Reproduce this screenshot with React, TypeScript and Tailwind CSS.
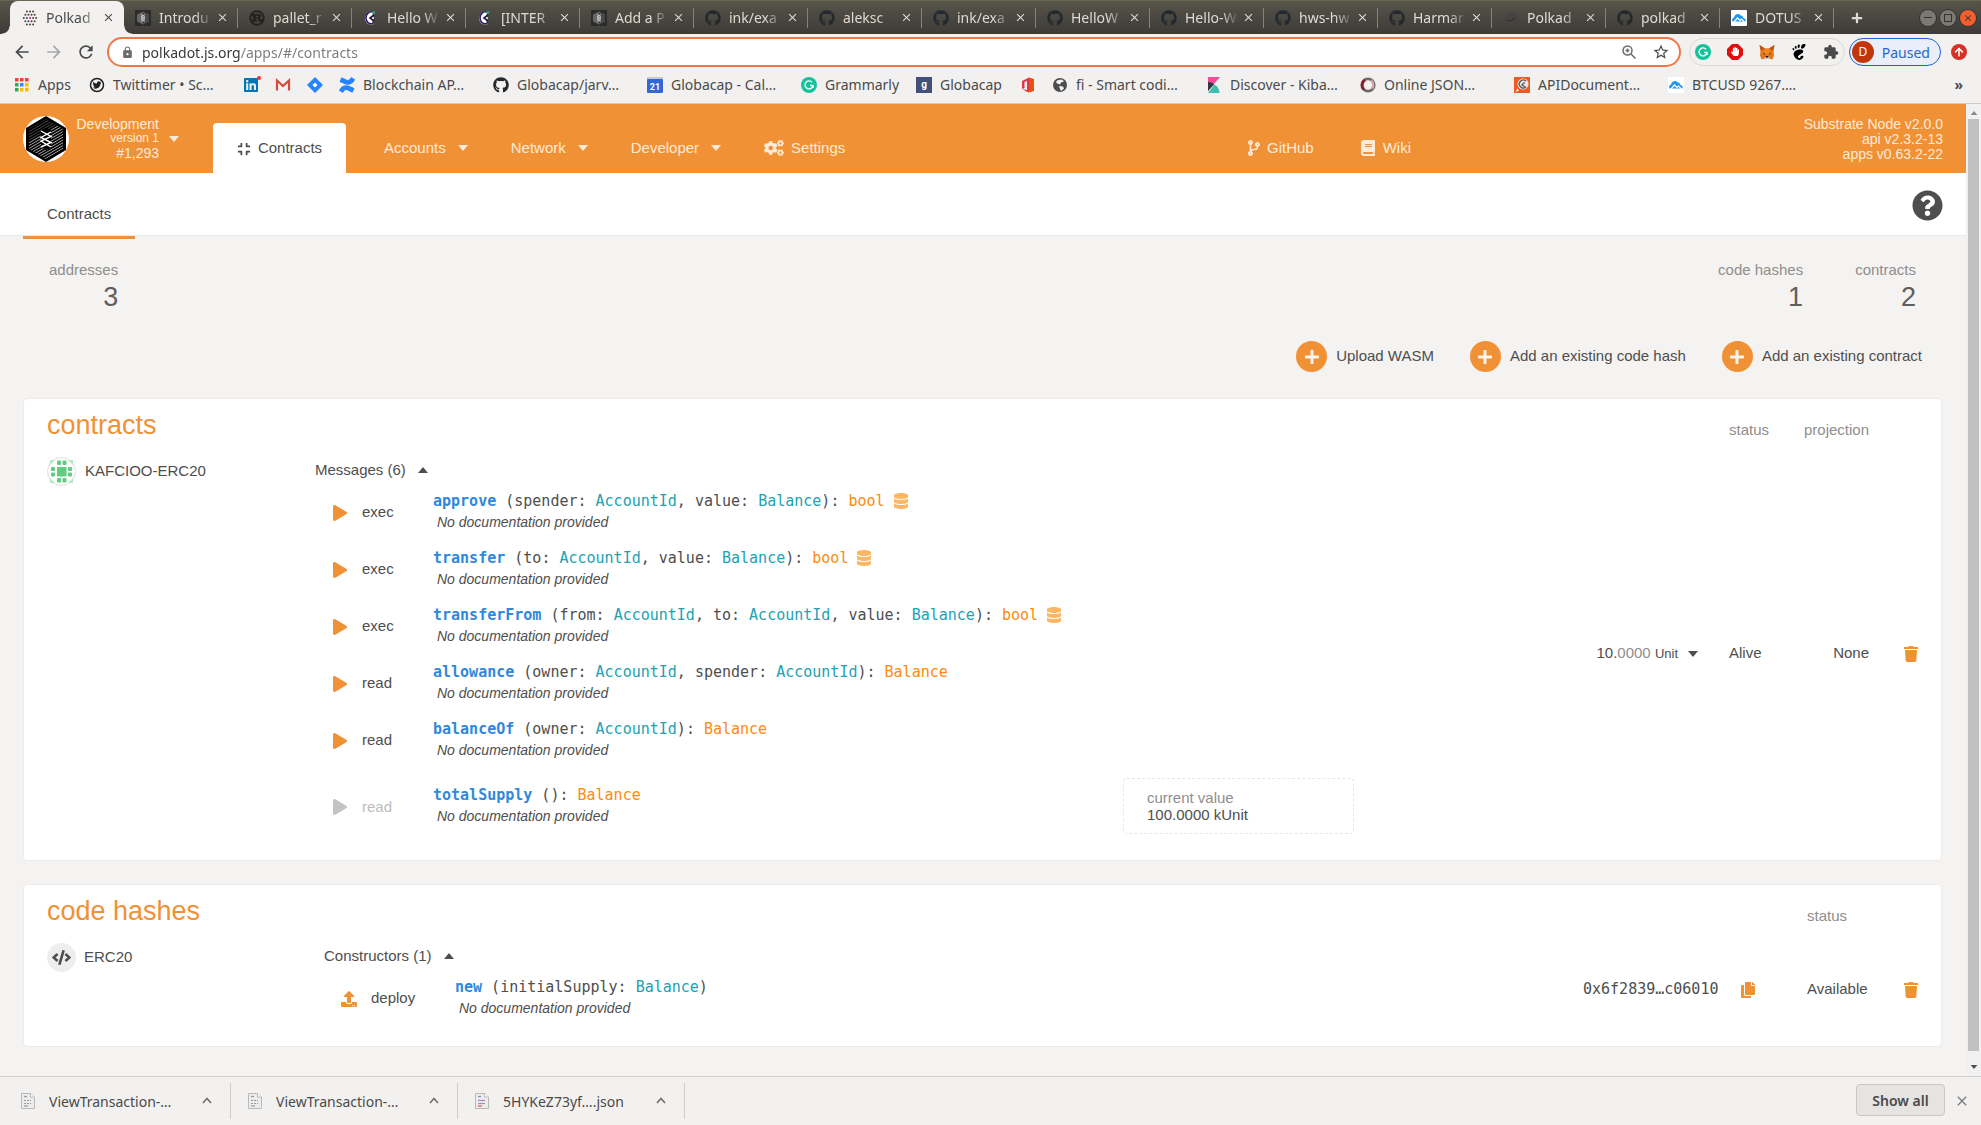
import React from 'react';
import {
  FaArrowUp,
  FaBook,
  FaCode,
  FaCodeBranch,
  FaCogs,
  FaCompress,
  FaCopy,
  FaDatabase,
  FaGithub,
  FaHandPaper,
  FaLinkedin,
  FaPlay,
  FaPlus,
  FaQuestionCircle,
  FaTrash,
  FaTwitter,
  FaUpload,
} from 'react-icons/fa';
import {
  MdArrowBack,
  MdArrowForward,
  MdClose,
  MdExtension,
  MdLock,
  MdRefresh,
  MdStarBorder,
} from 'react-icons/md';
import { SiConfluence, SiGnome, SiRust } from 'react-icons/si';

type IconName = string;

function DotRing() {
  const dots: React.ReactNode[] = [];
  const rows = [3, 4, 5, 4, 3];
  rows.forEach((n, r) => {
    for (let i = 0; i < n; i++) {
      const x = 8 + (i - (n - 1) / 2) * 3.1;
      const center = r === 2 && i === 2;
      dots.push(<circle key={`${r}-${i}`} cx={x} cy={1.6 + r * 3.2} r="1" fill={center ? '#e6007a' : '#444'} />);
    }
  });
  return (
    <svg viewBox="0 0 16 16" className="size-4">
      {dots}
    </svg>
  );
}

function Hexagon({ className }: { className: string }) {
  const lines = Array.from({ length: 18 }, (_, i) => i);
  return (
    <svg viewBox="0 0 46 46" className={className}>
      <defs>
        <clipPath id="hexClip">
          <polygon points="23,3 40,13 40,33 23,43 6,33 6,13" />
        </clipPath>
      </defs>
      <polygon points="23,0 43,12 43,34 23,46 3,34 3,12" fill="#000" />
      <g clipPath="url(#hexClip)" stroke="#d8d8d8" strokeWidth="0.9">
        {lines.map((i) => (
          <line key={i} x1="4" y1={14 + i * 2.8} x2="42" y2={-8 + i * 2.8} opacity={i < 5 ? 0.35 : 0.85} />
        ))}
      </g>
      <polygon points="18,14 23,12 28,14 28,32 23,34 18,31" fill="#000" />
      <path
        d="M18 15l10 5.500-10 4.500 10 6M28 16l-10 5.500 10 5-10 4.500"
        fill="none"
        stroke="#fff"
        strokeWidth="1.400"
      />
    </svg>
  );
}

function TinyHexagon() {
  return (
    <svg viewBox="0 0 16 16" className="size-4">
      <rect width="16" height="16" fill="#2b2b2b" />
      <path d="M8 1.500l6 3v7l-6 3-6-3v-7z" fill="#666" />
      <path d="M8 1.500l6 3v7l-6 3z" fill="#4a4a4a" />
      <path d="M6 4.500l4 2.500-4 2 4 2.500M10 4.500L6 7l4 2-4 2.500" fill="none" stroke="#ddd" strokeWidth="0.800" />
    </svg>
  );
}

function Identicon() {
  return (
    <svg viewBox="0 0 29 29" className="size-[29px] shrink-0">
      <circle cx="14.5" cy="14.5" r="14" fill="#fff" stroke="#ddd" />
      <g fill="#b5e7c3">
        <path d="M3 3h5l-5 5zM26 3v5l-5-5zM3 26v-5l5 5zM26 26h-5l5-5z" />
      </g>
      <g fill="#61cc7f">
        <rect x="10" y="10" width="9.500" height="9.500" />
        <rect x="10" y="3.500" width="4" height="4.500" rx="1" />
        <rect x="15.500" y="3.500" width="4" height="4.500" rx="1" />
        <rect x="10" y="21" width="4" height="4.500" rx="1" />
        <rect x="15.500" y="21" width="4" height="4.500" rx="1" />
        <rect x="4" y="10" width="4" height="4" rx="1" />
        <rect x="4" y="15.500" width="4" height="4" rx="1" />
        <rect x="21" y="10" width="4" height="4" rx="1" />
        <rect x="21" y="15.500" width="4" height="4" rx="1" />
      </g>
    </svg>
  );
}

function Favicon({ name }: { name: IconName }) {
  switch (name) {
    case 'polkadot':
      return <DotRing />;
    case 'substrate':
      return <TinyHexagon />;
    case 'rust':
      return <SiRust className="size-4 text-[#22201e]" />;
    case 'chat':
      return (
        <svg viewBox="0 0 16 16" className="size-4">
          <path d="M10 1.500A6.500 6.500 0 0 0 3 5c-1.500 3-1 6.500 1.500 8.500 2 1.300 4.500 1.300 6.500.5l-2-1.500 2-4.500-1.500-3z" fill="#fff" />
          <path d="M10 2C6 1 3 4 3 8s3 6.500 7.500 5.500" fill="none" stroke="#2a1c6b" strokeWidth="1.600" />
          <path d="M11 5L7 8l4 3" fill="none" stroke="#1c1747" strokeWidth="1.600" />
          <path d="M9 1.500h3.500L11 4.500z" fill="#2bb673" />
        </svg>
      );
    case 'github':
      return <FaGithub className="size-4 text-[#24292e]" />;
    case 'dark':
      return (
        <svg viewBox="0 0 16 16" className="size-4">
          <circle cx="8" cy="8" r="6" fill="#454442" />
          <path d="M3 10c3 2 7 1 9-3" stroke="#383735" fill="none" strokeWidth="1.500" />
        </svg>
      );
    case 'cloud':
      return (
        <svg viewBox="0 0 16 16" className="size-4">
          <rect width="16" height="16" rx="1" fill="#fff" />
          <path
            d="M1.500 11.500a3 3 0 0 1 1.500-4 3.800 3.800 0 0 1 6.500-2.200 3.500 3.500 0 0 1 3 2.700 2.500 2.500 0 0 1 2 3.500z"
            fill="#2196f3"
          />
          <path d="M3 12l3.500-4 2.500 2.500L10.500 9l3 3" fill="none" stroke="#fff" strokeWidth="1.200" />
        </svg>
      );
    case 'apps':
      return (
        <svg viewBox="0 0 14 14" className="size-[14px]">
          {['#ea4335', '#ea4335', '#ea4335', '#34a853', '#4285f4', '#fbbc05', '#34a853', '#fbbc05', '#fbbc05'].map(
            (c, i) => (
              <rect key={i} x={(i % 3) * 5} y={Math.floor(i / 3) * 5} width="3.500" height="3.500" fill={c} />
            ),
          )}
        </svg>
      );
    case 'twittimer':
      return (
        <svg viewBox="0 0 16 16" className="size-4">
          <circle cx="8" cy="8" r="6.500" fill="none" stroke="#222" strokeWidth="1.500" />
          <g transform="translate(3.500 3.500)">
            <FaTwitter size={9} color="#222" />
          </g>
        </svg>
      );
    case 'linkedin':
      return (
        <span className="relative">
          <FaLinkedin className="size-4 text-[#0077b5]" />
          <span className="absolute -top-px -right-0.5 size-1 rounded-full bg-red-500" />
        </span>
      );
    case 'gmail':
      return (
        <svg viewBox="0 0 16 16" className="size-4">
          <rect x="1" y="2.500" width="14" height="11" fill="#f3f3f3" />
          <path d="M2 13.500V3.500l6 5.500 6-5.500v10" fill="none" stroke="#d54b3d" strokeWidth="2.200" />
        </svg>
      );
    case 'jira':
      return (
        <svg viewBox="0 0 16 16" className="size-4">
          <path d="M8 0l8 8-8 8-8-8z" fill="#2684ff" />
          <path d="M8 5.500L10.500 8 8 10.500 5.500 8z" fill="#fff" />
        </svg>
      );
    case 'confluence':
      return <SiConfluence className="size-4 text-[#2684ff]" />;
    case 'calendar':
      return (
        <svg viewBox="0 0 16 16" className="size-4">
          <rect width="16" height="3" fill="#c9c9c9" />
          <rect y="2" width="16" height="14" rx="1" fill="#3367d6" />
          <text x="8" y="12.500" fontSize="9" fontWeight="700" textAnchor="middle" fill="#fff" fontFamily="Roboto, sans-serif">
            21
          </text>
        </svg>
      );
    case 'grammarly':
      return (
        <svg viewBox="0 0 16 16" className="size-4">
          <circle cx="8" cy="8" r="8" fill="#15c39a" />
          <path d="M11 5.200A4 4 0 1 0 12 8.500H9M12 8.500v2.500" fill="none" stroke="#fff" strokeWidth="1.400" />
        </svg>
      );
    case 'globacap':
      return (
        <svg viewBox="0 0 16 16" className="size-4">
          <rect width="16" height="16" fill="#43507a" />
          <text x="8" y="11" fontSize="10" fontWeight="700" textAnchor="middle" fill="#fff" fontFamily="Roboto, sans-serif">
            g
          </text>
        </svg>
      );
    case 'office':
      return (
        <svg viewBox="0 0 16 16" className="size-4">
          <path d="M2 4l7-3.500v15L2 12l5 1V4L4.500 5v6L2 12z" fill="#e0364c" />
          <path d="M9 .5l5 1.500v12l-5 1.500-5-2h5z" fill="#e8500f" />
        </svg>
      );
    case 'globe':
      return (
        <svg viewBox="0 0 16 16" className="size-4">
          <circle cx="8" cy="8" r="7" fill="#4d4d4d" />
          <path d="M6 3l4-.5 2 2-3 1-1 2-3-1-1-2zM7 9l4 .5 1 2-3 2.500-1-2z" fill="#f2f1f0" />
        </svg>
      );
    case 'kibana':
      return (
        <svg viewBox="0 0 16 16" className="size-4">
          <path d="M2 0h12L2 14z" fill="#f04e98" />
          <path d="M2 5c3 0 5 1 6 2.500L2 14z" fill="#343741" />
          <path d="M8.500 7.500C12 9.500 13 12 13.500 16H2z" fill="#3ebeb0" />
        </svg>
      );
    case 'json':
      return (
        <svg viewBox="0 0 16 16" className="size-4">
          <circle cx="8" cy="8" r="6.200" fill="none" stroke="#6b6b6b" strokeWidth="2.800" />
          <path d="M5 3a6 6 0 0 0-1 9.500" fill="none" stroke="#8b1f26" strokeWidth="2.800" />
          <path d="M11 3.500a6 6 0 0 1 1 8" fill="none" stroke="#d9a9ab" strokeWidth="2.400" />
        </svg>
      );
    case 'api':
      return (
        <svg viewBox="0 0 16 16" className="size-4">
          <rect width="16" height="16" fill="#ee5a24" />
          <circle cx="9" cy="7" r="5.500" fill="#e8e0dc" />
          <path d="M12 4a4 4 0 1 0 0 6M10.500 5.500L8 8l3 2" fill="none" stroke="#555" strokeWidth="1.200" />
          <path d="M1.500 15l2-3.500 1.500 2z" fill="#fff" />
        </svg>
      );
    case 'adblock':
      return (
        <svg viewBox="0 0 16 16" className="size-4">
          <path d="M5 0h6l5 5v6l-5 5H5l-5-5V5z" fill="#e40d0d" />
          <g transform="translate(3.500 3)">
            <FaHandPaper size={9} color="#fff" />
          </g>
        </svg>
      );
    case 'fox':
      return (
        <svg viewBox="0 0 16 16" className="size-[17px]">
          <path d="M.5.5L6 4h4l5.500-3.500-1 6.500.5 4-1.500 4-3.500-1H6l-3.500 1L1 11l.5-4z" fill="#e2761b" />
          <path d="M6 4h4l1 5-3 1-3-1z" fill="#f6851b" />
          <path d="M6 12h4l.5 2h-5z" fill="#d7c1b3" />
          <path d="M6.500 11.500h3l-.5 1.500H7z" fill="#161616" />
          <path d="M3.500 8.500L6 9l.3 1.200zM12.500 8.500L10 9l-.3 1.200z" fill="#233447" />
          <path d="M.5.500L6 4 2 6zM15.500.500L10 4l4 2z" fill="#b5561b" />
        </svg>
      );
    case 'gnome':
      return <SiGnome className="size-4 text-black" />;
    default:
      return null;
  }
}

function Caret({ up = false, className = 'h-[6px] w-[10px]' }: { up?: boolean; className?: string }) {
  return (
    <svg viewBox="0 0 10 6" className={`shrink-0 ${className}`}>
      <path d={up ? 'M0 6L5 0l5 6z' : 'M0 0h10L5 6z'} fill="currentColor" />
    </svg>
  );
}

const tabs: [IconName, string][] = [
  ['polkadot', 'Polkad'],
  ['substrate', 'Introdu'],
  ['rust', 'pallet_r'],
  ['chat', 'Hello W'],
  ['chat', '[INTER'],
  ['substrate', 'Add a P'],
  ['github', 'ink/exa'],
  ['github', 'aleksc'],
  ['github', 'ink/exa'],
  ['github', 'HelloW'],
  ['github', 'Hello-W'],
  ['github', 'hws-hw'],
  ['github', 'Harmar'],
  ['dark', 'Polkad'],
  ['github', 'polkad'],
  ['cloud', 'DOTUS'],
];

function TabStrip() {
  return (
    <header className="flex h-[34px] items-stretch border-t border-[#6b6652] bg-linear-to-b from-[#57544b] to-[#3d3b37] pl-[10px]">
      <div role="tablist" aria-label="Browser tabs" className="flex">
        {tabs.map(([icon, title], i) => (
          <div
            key={i}
            className={
              i === 0
                ? 'relative flex w-[114px] items-center rounded-t-lg bg-[#f2f1f0] pr-[9px] pl-3 text-[#4a4a4a]'
                : 'flex w-[114px] items-center pl-[11px] text-[#dfdbd2]'
            }
          >
            {i === 0 && (
              <>
                <span className="absolute bottom-0 -left-2 size-2 bg-[radial-gradient(circle_at_0_0,transparent_7px,#f2f1f0_8px)]" />
                <span className="absolute -right-2 bottom-0 size-2 bg-[radial-gradient(circle_at_100%_0,transparent_7px,#f2f1f0_8px)]" />
              </>
            )}
            <button role="tab" aria-selected={i === 0} className="flex flex-1 items-center gap-2">
              <span className="flex size-4 shrink-0 items-center justify-center">
                <Favicon name={icon} />
              </span>
              <span className="mask-[linear-gradient(to_right,#000_36px,transparent_54px)] text-[14px] leading-5 whitespace-nowrap">
                {title}
              </span>
            </button>
            <button aria-label={`Close ${title}`}>
              <MdClose className="size-[13px] stroke-current" />
            </button>
            {i > 0 && <span className="ml-2 h-5 w-px bg-[#85827a]" />}
          </div>
        ))}
      </div>
      <button aria-label="New tab" className="ml-[17px] text-[#dfdbd2]">
        <FaPlus className="size-3" />
      </button>
      <div className="mr-[5px] ml-auto flex items-center gap-1">
        <button aria-label="Minimize" className="flex size-4 items-center justify-center rounded-full bg-[#7b7972] ring-1 ring-[#35332f]">
          <span className="h-px w-2 bg-[#35332f]" />
        </button>
        <button aria-label="Maximize" className="flex size-4 items-center justify-center rounded-full bg-[#7b7972] ring-1 ring-[#35332f]">
          <span className="size-2 border border-[#35332f]" />
        </button>
        <button aria-label="Close window" className="flex size-4 items-center justify-center rounded-full bg-[#f0602f] text-[#35332f] ring-1 ring-[#35332f]">
          <MdClose className="size-[10px]" />
        </button>
      </div>
    </header>
  );
}

function Toolbar() {
  return (
    <div className="flex h-9 items-center bg-[#f2f1f0] pr-[14px] pl-3 text-[#4a4a4a]">
      <button aria-label="Back">
        <MdArrowBack className="size-5" />
      </button>
      <button aria-label="Forward" className="ml-3 text-[#a6a6a6]">
        <MdArrowForward className="size-5" />
      </button>
      <button aria-label="Reload" className="ml-3">
        <MdRefresh className="size-5" />
      </button>
      <div className="ml-[11px] flex h-[30px] min-w-0 flex-1 items-center rounded-full border-2 border-[#ef7847] bg-white pr-[9px] pl-3">
        <MdLock className="size-[13px] shrink-0 text-[#6b6b6b]" />
        <input
          aria-label="Address"
          defaultValue="polkadot.js.org/apps/#/contracts"
          className="ml-2 min-w-0 flex-1 bg-[linear-gradient(to_right,#333_99px,#7a7a7a_99px)] bg-clip-text text-[14px] text-transparent outline-none"
        />
        <button aria-label="Zoom">
          <svg viewBox="0 0 14 14" className="size-[14px]" fill="none" stroke="#6b6b6b" strokeWidth="1.500">
            <circle cx="5.500" cy="5.500" r="4.500" />
            <path d="M9 9l4.500 4.500M3.500 5.500h4M5.500 3.500v4" />
          </svg>
        </button>
        <button aria-label="Bookmark this page" className="ml-4">
          <MdStarBorder className="size-[18px]" />
        </button>
      </div>
      <div className="ml-2 flex h-7 items-center gap-4 rounded-full border border-[#dad9d8] px-[5px]">
        {['grammarly', 'adblock', 'fox', 'gnome'].map((n) => (
          <button key={n} aria-label={n} className="flex size-4 items-center justify-center">
            <Favicon name={n} />
          </button>
        ))}
        <button aria-label="Extensions">
          <MdExtension className="size-4" />
        </button>
      </div>
      <button className="ml-1 flex h-7 items-center rounded-full border border-[#1a62d6] bg-[#e9eef8] pr-[10px] pl-[2px] text-[14px] text-[#2766cf]">
        <span className="mr-2 flex size-[22px] items-center justify-center rounded-full bg-[#c1360c] text-[12px] text-white">
          D
        </span>
        Paused
      </button>
      <button aria-label="Update" className="ml-[10px] flex size-4 items-center justify-center rounded-full bg-[#d93025]">
        <FaArrowUp className="size-[10px] text-white" />
      </button>
    </div>
  );
}

const bookmarks: [IconName, string, string][] = [
  ['apps', 'Apps', 'w-[75px]'],
  ['twittimer', 'Twittimer • Sc…', 'w-[154px]'],
  ['linkedin', '', 'w-8'],
  ['gmail', '', 'w-8'],
  ['jira', '', 'w-8'],
  ['confluence', 'Blockchain AP…', 'w-[154px]'],
  ['github', 'Globacap/jarv…', 'w-[154px]'],
  ['calendar', 'Globacap - Cal…', 'w-[154px]'],
  ['grammarly', 'Grammarly', 'w-[115px]'],
  ['globacap', 'Globacap', 'w-[104px]'],
  ['office', '', 'w-8'],
  ['globe', 'fi - Smart codi…', 'w-[154px]'],
  ['kibana', 'Discover - Kiba…', 'w-[154px]'],
  ['json', 'Online JSON…', 'w-[154px]'],
  ['api', 'APIDocument…', 'w-[154px]'],
  ['cloud', 'BTCUSD 9267.…', 'w-[154px]'],
];

function BookmarksBar() {
  return (
    <nav aria-label="Bookmarks" className="flex h-[34px] items-center border-b border-[#cfccca] bg-[#f2f1f0] pr-[18px] pb-1 pl-[14px] text-[14px] text-[#4a4a4a]">
      {bookmarks.map(([icon, label, width], i) => (
        <a key={i} href="#" aria-label={label || icon} className={`flex shrink-0 items-center gap-2 whitespace-nowrap ${width}`}>
          <span className="flex size-4 items-center justify-center">
            <Favicon name={icon} />
          </span>
          {label}
        </a>
      ))}
      <button aria-label="More bookmarks" className="ml-auto font-bold">
        »
      </button>
    </nav>
  );
}

function AppHeader() {
  return (
    <header className="flex h-[69px] bg-[#f19135] pr-[23px] pl-[23px] text-[#fdebd9]">
      <button className="flex w-[190px] items-center">
        <span className="size-[46px] shrink-0 overflow-hidden rounded-full bg-white">
          <Hexagon className="size-[46px]" />
        </span>
        <span className="ml-2 flex w-[82px] flex-col items-end text-[14px] leading-[15px]">
          <span>Development</span>
          <span className="text-[12px] leading-[13px]">version 1</span>
          <span className="leading-4">#1,293</span>
        </span>
        <Caret className="ml-[10px] h-[6px] w-[10px]" />
      </button>
      <nav aria-label="Sections" className="flex">
        <a href="#" className="mt-[19px] flex w-[133px] items-center justify-center gap-[7px] rounded-t bg-white pt-px text-[#4e4e4e]">
          <FaCompress className="size-[14px]" />
          Contracts
        </a>
        <div className="mt-[19px] ml-[38px] flex items-center gap-[43px]">
          {['Accounts', 'Network', 'Developer'].map((label) => (
            <button key={label} className="flex items-center gap-3">
              {label}
              <Caret />
            </button>
          ))}
          <a href="#" className="flex items-center gap-[7px]">
            <FaCogs className="size-5" />
            Settings
          </a>
        </div>
      </nav>
      <div className="mx-auto mt-[19px] flex items-center gap-[46px] pl-2">
        <a href="#" className="flex items-center gap-[5px]">
          <FaCodeBranch className="size-4" />
          GitHub
        </a>
        <a href="#" className="flex items-center gap-[7px]">
          <FaBook className="size-4" />
          Wiki
        </a>
      </div>
      <div className="self-center pt-[2px] text-right text-[14px] leading-[15px]">
        <div>Substrate Node v2.0.0</div>
        <div>api v2.3.2-13</div>
        <div>apps v0.63.2-22</div>
      </div>
    </header>
  );
}

function Stat({ label, value }: { label: string; value: string }) {
  return (
    <div className="text-right">
      <div className="leading-5 text-[#8f8e8c]">{label}</div>
      <div className="text-[27px] leading-[34px] text-[#5f5e5d]">{value}</div>
    </div>
  );
}

interface Fn {
  action: string;
  name: string;
  args: [string, string][];
  result?: string;
  mutates?: boolean;
  value?: string;
}

const messages: Fn[] = [
  { action: 'exec', name: 'approve', args: [['spender', 'AccountId'], ['value', 'Balance']], result: 'bool', mutates: true },
  { action: 'exec', name: 'transfer', args: [['to', 'AccountId'], ['value', 'Balance']], result: 'bool', mutates: true },
  {
    action: 'exec',
    name: 'transferFrom',
    args: [['from', 'AccountId'], ['to', 'AccountId'], ['value', 'Balance']],
    result: 'bool',
    mutates: true,
  },
  { action: 'read', name: 'allowance', args: [['owner', 'AccountId'], ['spender', 'AccountId']], result: 'Balance' },
  { action: 'read', name: 'balanceOf', args: [['owner', 'AccountId']], result: 'Balance' },
  { action: 'read', name: 'totalSupply', args: [], result: 'Balance', value: '100.0000 kUnit' },
];

const constructors: Fn[] = [{ action: 'deploy', name: 'new', args: [['initialSupply', 'Balance']] }];

function FnRow({ fn }: { fn: Fn }) {
  const deploy = fn.action === 'deploy';
  const done = fn.value !== undefined;
  return (
    <li className={`flex items-center pl-[17px] ${done ? 'h-[76px]' : 'h-[57px]'}`}>
      <button
        disabled={done}
        className={`flex shrink-0 items-center pt-0.5 ${deploy ? 'w-[114px]' : 'w-[101px]'} ${done ? 'text-[#bdbdbd]' : ''}`}
      >
        <span className={`mr-[14px] ${done ? 'text-[#c4c4c4]' : 'text-[#f19135]'}`}>
          {deploy ? <FaUpload className="size-4" /> : <FaPlay className="size-4" />}
        </span>
        {fn.action}
      </button>
      <div className="min-w-0 basis-[690px]">
        <div className="flex items-center font-['DejaVu_Sans_Mono',monospace] leading-[21px] whitespace-pre">
          <span>
            <b className="font-bold text-[#3088dc]">{fn.name}</b>
            {' ('}
            {fn.args.map(([arg, type], i) => (
              <React.Fragment key={arg}>
                {i > 0 && ', '}
                {arg}: <span className="text-[#21a2b2]">{type}</span>
              </React.Fragment>
            ))}
            {')'}
            {fn.result && (
              <>
                {': '}
                <span className="text-[#ff8a0c]">{fn.result}</span>
              </>
            )}
          </span>
          {fn.mutates && <FaDatabase className="ml-2 size-4 text-[#ffb663]" />}
        </div>
        <div className="pl-1 text-[14px] leading-[21px] italic">No documentation provided</div>
      </div>
      {done && (
        <div className="h-14 w-[231px] rounded border border-dashed border-[#e8e8e8] pt-[10px] pl-[23px] leading-[17px]">
          <div className="text-[#8f8e8c]">current value</div>
          <div>{fn.value}</div>
        </div>
      )}
    </li>
  );
}

function FnList({ title, fns }: { title: string; fns: Fn[] }) {
  return (
    <>
      <button aria-expanded className="flex h-[26px] items-center gap-3">
        {title}
        <Caret up />
      </button>
      <ul>
        {fns.map((fn) => (
          <FnRow key={fn.name} fn={fn} />
        ))}
      </ul>
    </>
  );
}

function TrashButton() {
  return (
    <button aria-label="Forget" className="align-middle text-[#f19135]">
      <FaTrash className="size-4" />
    </button>
  );
}

function ContractsPage() {
  return (
    <div className="min-w-0 flex-1 bg-[#f4f3f1] font-['Liberation_Sans',Arial,sans-serif] text-[15px] text-[#4e4e4e]">
      <AppHeader />
      <div className="flex h-[63px] items-center justify-between border-b border-[#e9eaea] bg-white px-[23px]">
        <a href="#" className="-mb-1 flex h-[46px] items-center self-end border-b-[3px] border-[#f19135] px-6">
          Contracts
        </a>
        <button aria-label="Help" className="pt-[3px]">
          <FaQuestionCircle className="size-[31px]" />
        </button>
      </div>
      <main className="pt-6 pr-6 pl-[23px]">
        <div className="flex justify-between pr-[26px] pl-[26px]">
          <Stat label="addresses" value="3" />
          <div className="flex gap-[52px]">
            <Stat label="code hashes" value="1" />
            <Stat label="contracts" value="2" />
          </div>
        </div>
        <div className="mt-[27px] flex justify-end gap-9 pr-5">
          {['Upload WASM', 'Add an existing code hash', 'Add an existing contract'].map((label) => (
            <button key={label} className="flex items-center gap-[9px]">
              <span className="flex size-[31px] items-center justify-center rounded-full bg-[#f19135] text-[#fdf4ea]">
                <FaPlus className="size-4" />
              </span>
              {label}
            </button>
          ))}
        </div>

        <section className="mt-[26px] rounded border border-[#ecebea] bg-white">
          <table className="w-full table-fixed text-left">
            <colgroup>
              <col className="w-[279px]" />
              <col />
              <col className="w-[157px]" />
              <col className="w-[70px]" />
              <col className="w-[94px]" />
              <col className="w-[60px]" />
            </colgroup>
            <thead>
              <tr className="h-12 text-[#8f8e8c]">
                <th colSpan={3} className="pt-1 pl-[23px] text-[27px] leading-8 font-normal text-[#f19135]">
                  <h1>contracts</h1>
                </th>
                <th className="pt-[14px] pl-3 font-normal">status</th>
                <th className="pt-[14px] pr-3 text-right font-normal">projection</th>
                <th />
              </tr>
            </thead>
            <tbody>
              <tr>
                <td className="pt-[10px] pl-[23px] align-top">
                  <div className="flex items-center gap-[9px]">
                    <Identicon />
                    KAFCIOO-ERC20
                  </div>
                </td>
                <td className="pt-[10px] pb-4 pl-3">
                  <FnList title="Messages (6)" fns={messages} />
                </td>
                <td>
                  <button className="ml-auto flex items-center pr-[19px]">
                    <span>
                      10.<span className="text-[#8f8e8c]">0000</span> <span className="text-[13px]">Unit</span>
                    </span>
                    <Caret className="ml-[10px] h-[6px] w-[10px]" />
                  </button>
                </td>
                <td className="pl-3">Alive</td>
                <td className="pr-3 text-right">None</td>
                <td className="pr-[22px] text-right">
                  <TrashButton />
                </td>
              </tr>
            </tbody>
          </table>
        </section>

        <section className="mt-[23px] mb-6 rounded border border-[#ecebea] bg-white">
          <table className="w-full table-fixed text-left">
            <colgroup>
              <col className="w-[288px]" />
              <col />
              <col className="w-[212px]" />
              <col className="w-[86px]" />
              <col className="w-[60px]" />
            </colgroup>
            <thead>
              <tr className="h-12 text-[#8f8e8c]">
                <th colSpan={3} className="pt-1 pl-[23px] text-[27px] leading-8 font-normal text-[#f19135]">
                  <h1>code hashes</h1>
                </th>
                <th className="pt-[14px] pl-3 font-normal">status</th>
                <th />
              </tr>
            </thead>
            <tbody>
              <tr>
                <td className="pt-[10px] pl-[23px] align-top">
                  <div className="flex items-center gap-2">
                    <span className="flex size-[29px] items-center justify-center rounded-full bg-[#eeeeee]">
                      <FaCode className="size-[19px]" />
                    </span>
                    ERC20
                  </div>
                </td>
                <td className="pt-[10px] pb-5 pl-3">
                  <FnList title="Constructors (1)" fns={constructors} />
                </td>
                <td>
                  <div className="flex items-center gap-[22px]">
                    <span className="font-['DejaVu_Sans_Mono',monospace]">0x6f2839…c06010</span>
                    <button aria-label="Copy hash" className="text-[#f19135]">
                      <FaCopy className="size-4" />
                    </button>
                  </div>
                </td>
                <td className="pl-3">Available</td>
                <td className="pr-[22px] text-right">
                  <TrashButton />
                </td>
              </tr>
            </tbody>
          </table>
        </section>
      </main>
    </div>
  );
}

function Scrollbar() {
  return (
    <div aria-hidden className="flex w-[15px] shrink-0 flex-col items-center bg-[#f1f1f1] py-[7px]">
      <Caret up className="h-[4px] w-[8px] text-[#8a8a8a]" />
      <div className="mt-1 mb-[14px] w-[11px] flex-1 bg-[#c1c1c1]" />
      <Caret className="h-[4px] w-[8px] text-[#505050]" />
    </div>
  );
}

function FileIcon({ json }: { json: boolean }) {
  const c = json ? ['#7d8fb8', '#b07fb5', '#8f9bb0', '#d05a5a'] : ['#999', '#999', '#999', '#999'];
  return (
    <svg viewBox="0 0 14 16" className="h-4 w-[14px] shrink-0">
      <path d="M.5.5h9l4 3.500v11.500H.5z" fill="#ececec" stroke="#b9b9b9" />
      <path d="M9.500.5v3.500h4" fill="#fff" stroke="#b9b9b9" />
      <g strokeWidth="1.200">
        <path d="M3 3.500h3" stroke={c[0]} />
        <path d="M3 7.500h7" stroke={c[1]} strokeDasharray={json ? undefined : '2 1'} />
        <path d="M3 10.500h7" stroke={c[2]} strokeDasharray={json ? undefined : '2 1'} />
        <path d="M3 13h4" stroke={c[3]} />
      </g>
    </svg>
  );
}

function DownloadsBar() {
  const files = ['ViewTransaction-…', 'ViewTransaction-…', '5HYKeZ73yf….json'];
  return (
    <footer className="flex h-[49px] items-center border-t border-[#cfcfce] bg-[#f2f1f0] pr-[11px] pb-px pl-1 text-[14px] text-[#4a4a4a]">
      {files.map((f, i) => (
        <div key={i} className="flex h-9 w-[227px] items-center border-r border-[#cfcecd] pr-[18px] pl-[17px]">
          <button className="flex flex-1 items-center gap-[14px]">
            <FileIcon json={i === 2} />
            <span className="pt-0.5">{f}</span>
          </button>
          <button aria-label="File options">
            <svg viewBox="0 0 10 7" className="h-[7px] w-[10px]">
              <path d="M1 6l4-4.500L9 6" fill="none" stroke="#6e6e6e" strokeWidth="1.600" />
            </svg>
          </button>
        </div>
      ))}
      <button className="mb-px ml-auto h-8 w-[89px] rounded border border-[#c9c8c6] bg-[#e5e4e2] font-semibold">
        Show all
      </button>
      <button aria-label="Close downloads bar" className="ml-[9px] text-[#7d7d7d]">
        <MdClose className="size-4" />
      </button>
    </footer>
  );
}

export default function App() {
  return (
    <div className="flex min-h-screen flex-col overflow-x-hidden bg-[#f2f1f0] font-['Noto_Sans',sans-serif]">
      <TabStrip />
      <Toolbar />
      <BookmarksBar />
      <div className="flex flex-1">
        <ContractsPage />
        <Scrollbar />
      </div>
      <DownloadsBar />
    </div>
  );
}
